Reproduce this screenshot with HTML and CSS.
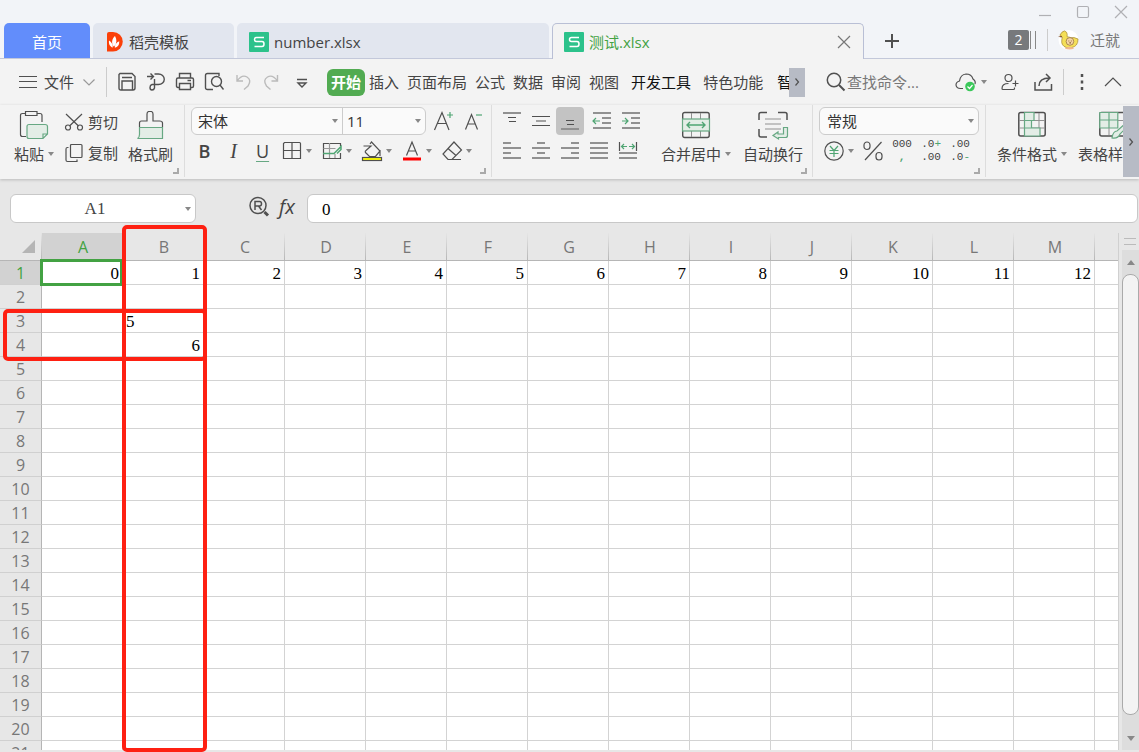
FILE: index.html
```html
<!DOCTYPE html>
<html lang="zh-CN">
<head>
<meta charset="utf-8">
<title>测试.xlsx</title>
<link rel="stylesheet" href="styles.css">
</head>
<body>
<svg class="defs" aria-hidden="true">
  <symbol id="caret" viewBox="0 0 6 4"><path d="M0 0h6L3 4z" fill="#888"/></symbol>
  <symbol id="sheet-logo" viewBox="0 0 20 20"><rect width="20" height="20" rx="1" fill="#2cc28b"/><path d="M15 5.500H7.500q-2 0-2 2t2 2h5.500q2 0 2 2.500t-2 2.500H5.500" fill="none" stroke="#fff" stroke-width="1.500"/></symbol>
  <symbol id="corner" viewBox="0 0 6 6"><path d="M5 0v5H0" fill="none" stroke="#aaa" stroke-width="2"/></symbol>
</svg>

<header class="titlebar">
  <div class="window-controls">
    <button aria-label="最小化"><svg viewBox="0 0 14 14"><path d="M1 10.500h12"/></svg></button>
    <button aria-label="最大化"><svg viewBox="0 0 14 14"><rect x="1.500" y="1.500" width="11" height="11" rx="1.500"/></svg></button>
    <button aria-label="关闭"><svg viewBox="0 0 14 14"><path d="M1 1l12 12M13 1L1 13"/></svg></button>
  </div>
  <div class="tabstrip">
    <button class="tab tab-home">首页</button>
    <button class="tab tab-template"><svg class="logo" viewBox="0 0 20 20"><path d="M4 0h4a9.500 9.500 0 010 19.500H2V2q0-2 2-2z" fill="#fb4009"/><path d="M8.700 14.500C6 11 7 6.500 10 4c2 3.500 2 7-.8 10.500zM7.800 15.500C4.800 15 3.500 11.500 4 8.500 6.500 10 8 12.500 7.800 15.500zM9.800 15.800c0-3 1.500-5.500 4.500-6.500 0 4-1.500 6-4.500 6.500z" fill="#fff"/></svg>稻壳模板</button>
    <button class="tab tab-file"><svg class="logo"><use href="#sheet-logo"/></svg>number.xlsx</button>
    <div class="tab tab-file tab-active"><svg class="logo"><use href="#sheet-logo"/></svg><span class="tab-name">测试.xlsx</span>
      <button class="tab-close" aria-label="关闭标签"><svg viewBox="0 0 14 14"><path d="M1 1l12 12M13 1L1 13"/></svg></button>
    </div>
    <button class="tab-add" aria-label="新建"><svg viewBox="0 0 16 16"><path d="M8 1v14M1 8h14"/></svg></button>
    <div class="account">
      <span class="count">2</span>
      <svg class="avatar" viewBox="0 0 22 22"><circle cx="11" cy="11" r="10.500" fill="#fff"/><path d="M2 6l2-3q3-3 5 0 1 2 .5 4.500Q14 9 17 8.500L21 10q0 8-7 9H9q-6-2-5-8L4.500 8z" fill="#f4df57" stroke="#a98d3b" stroke-width=".8"/><path d="M0 7.500L4 6.500 4 8.500z" fill="#7d4a26"/><circle cx="12.500" cy="12.500" r="4" fill="#f7d7a4" stroke="#94703d" stroke-width=".8"/><path d="M7 20q5-4 10 0-5 2-10 0z" fill="#f1b98c"/><path d="M11 12h.8M13.500 12h.8M12 14h1.500" stroke="#7d4a26"/></svg>
      <span class="user">迁就</span>
    </div>
  </div>
</header>

<nav class="menubar">
  <button class="file-menu"><svg class="i18" viewBox="0 0 18 18"><path d="M0 3.500h18M0 8.500h18M0 14.500h18"/></svg>文件<svg class="chev" viewBox="0 0 12 7"><path d="M.5.5L6 6 11.500.5" stroke="#999"/></svg></button>
  <div class="quick">
    <button aria-label="保存"><svg viewBox="0 0 20 20"><path d="M3 1.500h12l3 3v11.500q0 2-2 2H4q-2 0-2-2V2.500zM5 18V9h10.500v9M5 5.500h10"/></svg></button>
    <button aria-label="输出为PDF"><svg viewBox="0 0 20 20"><path d="M1 4.500h6M4.500 1.500l3 3-3 3M8.500 2h4a5.500 5 0 010 10.500H8M8.500 7v9q-.5 2-2.500 2t-2-2.500 2-3h3"/></svg></button>
    <button aria-label="打印"><svg viewBox="0 0 20 20"><path d="M4.500 6V1.500h11V6M4 15.500H3q-1.500 0-1.500-1.500V7.500Q1.500 6 3 6h14q1.500 0 1.500 1.500V14q0 1.500-1.500 1.500h-1M4.500 11.500h11v6h-11zM12.500 8.500H16"/></svg></button>
    <button aria-label="打印预览"><svg viewBox="0 0 20 20"><path d="M9 17.500H3.500q-2 0-2-2v-12q0-2 2-2H15V4"/><circle cx="12.500" cy="9.500" r="5"/><path d="M16 13l3.500 4.500"/></svg></button>
    <button aria-label="撤销"><svg class="muted" viewBox="0 0 20 20"><path d="M4 3v6h6M4 9q5-7 10-4t1 9l-4 3.500"/></svg></button>
    <button aria-label="恢复"><svg class="muted" viewBox="0 0 20 20"><path d="M15.500 3v6h-6M15.500 9q-5-7-10-4t-1 9l4 3.500"/></svg></button>
    <button aria-label="自定义快速访问"><svg viewBox="0 0 20 20"><path d="M6 7.500h10M7 11l4 4 4-4z"/></svg></button>
  </div>
  <div class="menus">
    <button class="current">开始</button>
    <button>插入</button><button>页面布局</button><button>公式</button><button>数据</button><button>审阅</button><button>视图</button>
    <button class="wide dark">开发工具</button><button class="wide">特色功能</button><button class="wide cut dark">智能</button>
  </div>
  <button class="menu-next" aria-label="更多选项卡"><svg viewBox="0 0 4 8"><path d="M.5.5L3.500 4 .5 7.500"/></svg></button>
  <label class="search"><svg class="i20" viewBox="0 0 20 20"><circle cx="8" cy="8" r="6.700" stroke-width="1.500"/><path d="M13 13l5.500 5.500" stroke-width="2"/></svg><input type="text" placeholder="查找命令..." aria-label="查找命令"></label>
  <div class="menu-right">
    <button class="drop" aria-label="云同步"><svg class="cloud" viewBox="0 0 22 20"><path d="M8 16.500H5.500q-4 0-4.500-3.500 0-3 3.500-4Q5.500 2.500 11 2q5.500 0 7 5 3 2 2 5"/><circle cx="15" cy="14.500" r="4.800" fill="#3bc85a" stroke="none"/><path d="M12.500 14.500l2 2 3-3.500" stroke="#fff"/></svg><svg class="caret"><use href="#caret"/></svg></button>
    <button aria-label="协作"><svg class="i18" viewBox="0 0 18 18"><circle cx="7.500" cy="5" r="3.500"/><path d="M7.500 10.500q-6.500 0-6.500 5 0 1 1 1h10.500q1 0 1-1v-1M14.500 7.500v6M11.500 10.500h6"/></svg></button>
    <button aria-label="分享"><svg class="i20" viewBox="0 0 20 20"><path d="M2 10v8h16.500v-6M6 14q0-8 10.500-8M13 2l4 4-4 4" stroke-width="1.500"/></svg></button>
    <span class="rule"></span>
    <button aria-label="更多"><svg class="dots" viewBox="0 0 4 16"><path d="M2 0v3M2 6.500v3M2 13v3" stroke-width="2.500"/></svg></button>
    <button aria-label="收起功能区"><svg class="i18" viewBox="0 0 18 18"><path d="M1 13l8-8 8 8"/></svg></button>
  </div>
</nav>

<section class="ribbon">
  <div class="group clipboard">
    <button class="big"><svg class="i28" viewBox="0 0 28 28"><path d="M5 2.500H2.500Q.5 2.500.5 4.500v19q0 2 2 2H6M17 2.500h3q2 0 2 2V11M5.500.5H17v4H5.500z"/><path d="M9 13.500h16q2.500 0 2.500 2V23l-4.500 4.500H9q-2 0-2-2V15.500q0-2 2-2zM27 23h-4v4" fill="#e3ede6" stroke="#67a883"/></svg><span>粘贴<svg class="caret"><use href="#caret"/></svg></span></button>
    <div class="stack">
      <button class="small"><svg class="i18" viewBox="0 0 18 18"><path d="M1 1l12.500 12M17 1L4.500 13"/><circle cx="3" cy="14.500" r="2.500"/><circle cx="15" cy="14.500" r="2.500"/></svg>剪切</button>
      <button class="small"><svg class="i18" viewBox="0 0 18 18"><path d="M6.500.5H16q1 0 1 1v11q0 1-1 1H6.500q-1 0-1-1v-11q0-1 1-1zM3.500 3.500h-1q-1.500 0-1.500 1.500v11q0 1.500 1.500 1.500H12v-2"/></svg>复制</button>
    </div>
    <button class="big"><svg class="i28" viewBox="0 0 28 28"><path d="M2.500 16v-4q0-2 2-2H10V3q0-2 1.500-2.500h3Q16 1 16 3v7h6.500q3 0 3 2v4"/><path d="M2.500 16.500h23v11H.5q2-1 2-4z" fill="#e3ede6" stroke="#67a883"/></svg><span>格式刷</span></button>
    <svg class="launcher"><use href="#corner"/></svg>
  </div>

  <div class="group font">
    <div class="stack">
      <div class="row">
        <div class="combo">
          <select class="font-name" aria-label="字体"><option>宋体</option></select><select class="font-size" aria-label="字号"><option>11</option></select>
        </div>
        <button aria-label="增大字号"><svg class="i20" viewBox="0 0 20 20"><path d="M1.500 19L9 1.500 16 19M4.500 12.500h9"/><path class="green" d="M14 4h6M17 1v6"/></svg></button>
        <button class="shrink" aria-label="减小字号"><svg class="i20" viewBox="0 0 20 20"><path d="M2.500 18.500L8.500 3.500l6 15M5 13h7.500"/><path class="green" d="M13 4h6"/></svg></button>
      </div>
      <div class="row format">
        <button class="glyph bold">B</button>
        <button class="glyph italic">I</button>
        <button class="glyph underline">U</button>
        <button class="drop" aria-label="边框"><svg class="i20" viewBox="0 0 20 20"><path d="M2.500 1.500h15q1 0 1 1v15H1.500v-15zM10 1.500v16M1.500 9.500h17"/></svg><svg class="caret"><use href="#caret"/></svg></button>
        <button class="drop" aria-label="单元格样式"><svg class="i20" viewBox="0 0 20 20"><path d="M18.500 5V2.500h-17v15h17V12"/><path d="M7.500 2v15M1.500 7.500h12M13 13v4" stroke="#999"/><path class="green" d="M1 12.500h11L19 5.500v3l-4 4" stroke-width="1.500"/></svg><svg class="caret"><use href="#caret"/></svg></button>
        <button class="drop" aria-label="填充颜色"><svg class="i20" viewBox="0 0 20 20"><path d="M1.500 5H9l-5 4.500q-1.500 1 0 2.500l3.500 3.500h6L18 10 9.500 1 8 3M18 9v6"/><rect x=".5" y="16.500" width="19" height="3" fill="#ff0"/></svg><svg class="caret"><use href="#caret"/></svg></button>
        <button class="drop" aria-label="字体颜色"><svg class="i20" viewBox="0 0 20 20"><path d="M4.500 14.500L10 1l5.500 13.500M6.500 10h7"/><path d="M1 18h18" stroke="#f00" stroke-width="3"/></svg><svg class="caret"><use href="#caret"/></svg></button>
        <button class="drop" aria-label="清除"><svg class="i20" viewBox="0 0 20 20"><path d="M12 1l7.500 8L10 18.500H6l-5-5.500zM6 7.500l8 7M9 18.500h10"/></svg><svg class="caret"><use href="#caret"/></svg></button>
      </div>
    </div>
    <svg class="launcher"><use href="#corner"/></svg>
  </div>

  <div class="group align">
    <div class="stack">
      <div class="row cells">
        <button aria-label="顶端对齐"><svg viewBox="0 0 18 18"><path class="grey" d="M0 1h18"/><path d="M5 5.500h8M6 9.500h7"/></svg></button>
        <button aria-label="垂直居中"><svg viewBox="0 0 18 18"><path d="M0 4.500h18M0 13.500h18M4 9h10"/></svg></button>
        <button class="pressed" aria-label="底端对齐"><svg viewBox="0 0 18 18"><path class="grey" d="M0 17h18"/><path d="M5 8.500h8M6 12.500h7"/></svg></button>
        <button class="indent" aria-label="减少缩进"><svg viewBox="0 0 18 18"><path class="grey" d="M0 1h18M9 6h9M9 11h9M0 16h18"/><path class="green" d="M0 9h7M3 6L0 9l3 3"/></svg></button>
        <button aria-label="增加缩进"><svg viewBox="0 0 18 18"><path class="grey" d="M0 1h18M9 6h9M9 11h9M0 16h18"/><path class="green" d="M0 9h6M3 6l3 3-3 3"/></svg></button>
      </div>
      <div class="row cells">
        <button aria-label="左对齐"><svg viewBox="0 0 18 18"><path class="grey" d="M0 1h8M0 6h18M0 11h8M0 16h18"/></svg></button>
        <button aria-label="居中"><svg viewBox="0 0 18 18"><path class="grey" d="M5 1h8M0 6h18M5 11h8M0 16h18"/></svg></button>
        <button aria-label="右对齐"><svg viewBox="0 0 18 18"><path class="grey" d="M10 1h8M0 6h18M10 11h8M0 16h18"/></svg></button>
        <button aria-label="两端对齐"><svg viewBox="0 0 18 18"><path class="grey" d="M0 1h18M0 6h18M0 11h18M0 16h18"/></svg></button>
        <button aria-label="分散对齐"><svg viewBox="0 0 18 18"><path d="M.5 0v9M17.500 0v9"/><path class="grey" d="M0 11h18M0 16h18"/><path class="green" d="M2.500 4.500H8M5 2L2.500 4.500 5 7M10 4.500h5.500M13 2l2.500 2.500L13 7"/></svg></button>
      </div>
    </div>
    <button class="big"><svg class="i28" viewBox="0 0 28 28"><rect x=".7" y="1.500" width="26.500" height="25" rx="2" stroke-width="1.400"/><path class="grey thin" d="M9.500 2v24M18.500 2v24"/><rect x=".5" y="8" width="27" height="12" fill="#e3ede6" stroke="#67a883"/><path class="green" d="M5 14h18M8 11l-3 3 3 3M20 11l3 3-3 3" stroke-width="1.400"/></svg><span>合并居中<svg class="caret"><use href="#caret"/></svg></span></button>
    <button class="big wrap"><svg class="i28" viewBox="0 0 28 28"><path d="M0 9V3.500q0-2 2-2h6M19 1.500h7q2 0 2 2V9M0 18v6q0 2 2 2h6" stroke-width="1.500"/><path class="grey thin" d="M6 8h16M6 13h16M6 18h16"/><path d="M24.500 16.500H28.500v8q0 2-2 2h-7v1.500L14 24.500l5-3.500v2h5.500z" fill="#e3ede6" stroke="#67a883"/></svg><span>自动换行</span></button>
    <svg class="launcher"><use href="#corner"/></svg>
  </div>

  <div class="group">
    <div class="stack">
      <div class="combo"><select class="number-format" aria-label="数字格式"><option>常规</option></select></div>
      <div class="row number">
        <button class="drop" aria-label="货币"><svg class="i20" viewBox="0 0 20 20"><circle cx="10" cy="10" r="9.200"/><path class="green" d="M6 5l4 4.500L14 5M10 9.500V16M5.500 9.500h9M5.500 12.500h9"/></svg><svg class="caret"><use href="#caret"/></svg></button>
        <button aria-label="百分比"><svg class="i20" viewBox="0 0 20 20"><path d="M18.500 1L2 19"/><rect x="1" y="1" width="6" height="7.500" rx="3"/><rect x="13" y="11.500" width="6" height="7.500" rx="3"/></svg></button>
        <button class="digits" aria-label="千位分隔"><span>000</span><span class="sep-mark">,</span></button>
        <button class="digits" aria-label="增加小数位数"><span>.0<b>+</b></span><span>.00</span></button>
        <button class="digits" aria-label="减少小数位数"><span>.00</span><span>.0<b>-</b></span></button>
      </div>
    </div>
    <svg class="launcher"><use href="#corner"/></svg>
  </div>

  <div class="group styles">
    <button class="big"><svg class="i28" viewBox="0 0 28 28"><rect x=".8" y="1.500" width="26.400" height="23.500" rx="2" stroke-width="1.500"/><path class="grey thin" d="M1 9.500h26M1 17h26M21 2v23"/><path d="M6.500 1.500H16V9.500H6.500zM6.500 9.500h7V17h-7zM6.500 17H22v8H6.500z" fill="#e3ede6" stroke="#67a883"/></svg><span>条件格式<svg class="caret"><use href="#caret"/></svg></span></button>
    <button class="big"><svg class="i28" viewBox="0 0 28 28"><rect x=".8" y="1.500" width="26.400" height="23.500" rx="2" stroke-width="1.500"/><path d="M.8 1.500h18V17H.8zM10 1.500V17M.8 9h18" fill="#e3ede6" stroke="#67a883"/><path class="grey thin" d="M19 9.500h8M10 17v7"/><path d="M27 12l-9 8q-4 0-5 7 6 1 8-4l7-7z" fill="#e3ede6" stroke="#67a883"/></svg><span>表格样式<svg class="caret"><use href="#caret"/></svg></span></button>
  </div>
  <button class="ribbon-next" aria-label="更多工具"><svg viewBox="0 0 4 8"><path d="M.5.5L3.500 4 .5 7.500"/></svg></button>
</section>

<section class="formula-bar">
  <select class="name-box" aria-label="名称框"><option>A1</option></select>
  <div class="formula-tools">
    <button aria-label="浏览"><svg class="i22" viewBox="0 0 22 22"><circle cx="9" cy="9.500" r="8" stroke-width="1.500"/><path d="M6 14V5.500h4.500q2 0 2 2.200t-2 2.300H6M9.500 10l3 4" stroke-width="1.500"/><path d="M15.500 16l3.500 3.500" stroke-width="3"/></svg></button>
    <button class="fx">fx</button>
  </div>
  <input class="formula" type="text" value="0" aria-label="编辑栏">
</section>

<main class="workspace">
  <div class="sheet">
    <table>
      <thead><tr id="columns"><th class="corner" aria-label="全选"><svg viewBox="0 0 14 14"><path d="M14 0v14H0z"/></svg></th></tr></thead>
      <tbody id="rows"></tbody>
    </table>
    <div class="selection"></div>
  </div>
  <div class="scrollbar">
    <div class="splitter"></div>
    <div class="track">
      <button aria-label="向上滚动"><svg viewBox="0 0 8 5"><path d="M0 5h8L4 0z"/></svg></button>
      <div class="thumb"></div>
      <button aria-label="向下滚动"><svg viewBox="0 0 8 5"><path d="M0 0h8L4 5z"/></svg></button>
    </div>
  </div>
  <div class="mark mark-column"></div>
  <div class="mark mark-rows"></div>
</main>
<script src="script.js"></script>
</body>
</html>
```

FILE: styles.css
```css
* { box-sizing: border-box; }

body {
  margin: 0;
  height: 100vh;
  display: flex;
  flex-direction: column;
  overflow: hidden;
  background: #e7e7e7;
  color: #444;
  font: 15px/20px "Open Sans", "Noto Sans CJK SC", sans-serif;
}

button, select, input {
  margin: 0;
  padding: 0;
  border: 0;
  background: none;
  color: inherit;
  font: inherit;
  border-radius: 0;
}

button {
  display: flex;
  align-items: center;
  justify-content: center;
  flex: none;
  white-space: nowrap;
}

svg { display: block; flex: none; fill: none; stroke: #505050; stroke-width: 1.2; overflow: visible; }
.defs { position: absolute; width: 0; height: 0; }
use { stroke: none; }
.i18 { width: 18px; height: 18px; }
.i20 { width: 20px; height: 20px; }
.i22 { width: 22px; height: 22px; }
.i28 { width: 28px; height: 28px; }
.caret { width: 6px; height: 4px; }
.green { stroke: #4fa573; }
.grey { stroke: #919191; stroke-width: 2; }
.thin { stroke-width: 1; }

/* Title bar */
.titlebar { flex: none; background: #f2f4f8; }

.window-controls {
  display: flex;
  justify-content: flex-end;
  gap: 24px;
  height: 23px;
  padding-right: 11px;
}
.window-controls svg { width: 14px; height: 14px; stroke: #b0b0b4; }

.tabstrip {
  display: flex;
  gap: 3px;
  height: 36px;
  padding-left: 4px;
  border-bottom: 1px solid #c3c8da;
}

.tab {
  justify-content: flex-start;
  align-items: center;
  padding: 2px 12px 0;
  gap: 5px;
  border-radius: 5px 5px 0 0;
  background: #e2e6ef;
}
.tab-home { width: 86px; justify-content: center; background: #628dfb; color: #fff; }
.tab-template { width: 141px; gap: 4px; }
.tab-file { width: 312px; }
.tab-active {
  display: flex;
  margin-bottom: -1px;
  padding: 0 12px 0 11px;
  border: 1px solid #b9bfd5;
  border-bottom: 0;
  background: #f3f3f3;
}
.tab-name { flex: 1; color: #43a243; }
.tab-close svg { width: 14px; height: 14px; stroke: #777; }
.logo { width: 20px; height: 20px; stroke: none; }
.tab-add { margin-left: 17px; }
.tab-add svg { width: 16px; height: 16px; stroke-width: 2; }

.account {
  display: flex;
  align-items: center;
  margin-left: auto;
  padding-right: 19px;
  padding-bottom: 2px;
  color: #777;
}
.count {
  position: relative;
  width: 21px;
  margin-right: 18px;
  border-radius: 2px;
  background: #77797c;
  color: #fff;
  text-align: center;
  font-size: 14px;
}
.count::after {
  content: "";
  position: absolute;
  left: 22px;
  top: 1px;
  width: 4px;
  height: 18px;
  border: solid #888;
  border-width: 0 1px;
}
.avatar {
  width: 32px;
  height: 22px;
  padding-left: 10px;
  border-left: 1px solid #ccc;
  stroke: none;
}
.user { margin-left: 11px; }

/* Menu bar */
.menubar {
  display: flex;
  flex: none;
  align-items: center;
  height: 46px;
  padding-left: 19px;
  background: #f3f3f3;
}
.file-menu { gap: 7px; padding-right: 11px; border-right: 1px solid #ccc; height: 30px; }
.chev { width: 12px; height: 7px; margin-left: 2px; }
.quick { display: flex; gap: 9px; padding-left: 10px; }
.quick svg { width: 20px; height: 20px; stroke-width: 1.4; }
.quick .muted { stroke: #bbb; }

.menus { display: flex; align-items: center; width: 473px; margin-left: 16px; overflow: hidden; }
.menus button { margin-right: 8px; }
.menus .current {
  width: 38px;
  height: 27px;
  margin-right: 4px;
  border-radius: 6px;
  background: #52ab52;
  color: #fff;
  font-weight: 700;
}
.menus .wide { margin-left: 4px; }
.menus .cut { margin-left: 6px; }
.menus .dark { color: #111; }

.menu-next, .ribbon-next { width: 16px; background: #b7bbc5; }
.menu-next { position: relative; height: 29px; margin-left: -11px; }
.menu-next svg, .ribbon-next svg { width: 4px; height: 8px; }

.search { display: flex; align-items: center; margin-left: 21px; gap: 1px; }
.search input { width: 84px; }
.search input::placeholder { color: #777; opacity: 1; }

.menu-right {
  display: flex;
  align-items: center;
  gap: 14px;
  margin-left: auto;
  padding-right: 17px;
}
.drop { gap: 4px; }
.cloud { width: 22px; height: 20px; }
.rule { width: 1px; height: 26px; margin: 0 2px 0 -4px; background: #ccc; }
.dots { width: 4px; height: 16px; margin-right: 6px; }

/* Ribbon */
.ribbon {
  display: flex;
  flex: none;
  height: 74px;
  background: #f3f3f3;
  box-shadow: 0 1px 3px #bbb;
}
.group {
  position: relative;
  display: flex;
  flex: none;
  height: 72px;
  padding: 2px 6px 0;
  border-right: 1px solid #ddd;
}
.launcher { position: absolute; right: 5px; bottom: 3px; width: 6px; height: 6px; }
.stack { display: flex; flex-direction: column; gap: 2px; }
.row { display: flex; align-items: center; height: 28px; }

.big {
  flex-direction: column;
  justify-content: flex-start;
  padding-top: 4px;
}
.big span { display: flex; align-items: center; gap: 4px; line-height: 30px; }
.small { height: 29px; gap: 5px; }
.clipboard { padding-left: 14px; padding-right: 11px; }
.clipboard .stack { margin: 0 10px 0 11px; }
.font { padding-right: 8px; }

.combo {
  display: flex;
  border: 1px solid #ccc;
  border-radius: 6px;
  background: #fafafa;
}
.combo select, .name-box {
  appearance: none;
  background: url("data:image/svg+xml,%3Csvg xmlns='http://www.w3.org/2000/svg' viewBox='0 0 6 4'%3E%3Cpath d='M0 0h6L3 4z' fill='%23888'/%3E%3C/svg%3E") no-repeat right 4px center / 6px 4px;
}
.combo select { height: 26px; padding-left: 6px; color: #333; }
.combo .font-name { width: 151px; border-right: 1px solid #ccc; }
.combo .font-size { width: 82px; padding-left: 4px; }
.combo .number-format { width: 158px; padding-left: 7px; }
.combo + button { margin-left: 7px; }
.shrink { margin-left: 10px; }

.format { gap: 10px; padding-left: 4px; }
.glyph { width: 19px; height: 26px; font-size: 18px; line-height: 22px; }
.bold { font-weight: 600; }
.italic { font-family: "Liberation Serif", serif; font-style: italic; font-size: 20px; }
.underline { text-decoration: underline 1px #67a883; text-underline-offset: 3px; }

.align { padding-right: 9px; }
.cells { gap: 1px; }
.cells button { width: 28px; height: 28px; border-radius: 4px; }
.cells svg { width: 18px; height: 18px; }
.cells .pressed { background: #c3c3c3; }
.cells .indent { margin-left: 3px; }
.align .stack { margin-right: 16px; }
.wrap { margin-left: 12px; }

.number { gap: 9px; padding-left: 5px; }
.digits {
  flex-direction: column;
  min-width: 20px;
  font: 11px/13px "Liberation Mono", monospace;
}
.digits b { color: #4fa573; font-weight: 400; }
.digits .sep-mark { color: #4fa573; font-weight: 700; }

.styles { flex: 1 1 0; gap: 11px; padding-left: 11px; padding-right: 0; border: 0; overflow: hidden; }
.ribbon-next { height: 71px; margin-top: 1px; }

/* Formula bar */
.formula-bar {
  display: flex;
  flex: none;
  align-items: center;
  height: 54px;
  padding: 5px 1px 0 10px;
}
.name-box, .formula {
  height: 29px;
  border: 1px solid #c8c8c8;
  border-radius: 6px;
  background-color: #fff;
  font: 17px/20px "Liberation Serif", serif;
}
.name-box { width: 186px; padding-right: 16px; text-align: center; text-align-last: center; }
.formula-tools { display: flex; align-items: center; gap: 8px; width: 111px; padding: 0 0 4px 53px; }
.fx { font: italic 20px/22px "Open Sans", sans-serif; }
.formula { flex: 1; min-width: 0; padding: 2px 0 0 14px; color: #000; }

/* Worksheet */
.workspace { position: relative; display: flex; flex: 1; min-height: 0; padding-bottom: 2px; }
.sheet { position: relative; flex: 1; min-width: 0; overflow: hidden; background: #fff; border-right: 1px solid #d0d0d0; }

table { width: 1176px; border-collapse: separate; border-spacing: 0; table-layout: fixed; }
th {
  padding: 0;
  color: #777;
  font-size: 16px;
  font-weight: 400;
  line-height: 20px;
  text-align: center;
  background: #e7e7e7;
}
thead th {
  width: 81px;
  height: 28px;
  padding-left: 2px;
  border-right: 1px solid;
  border-bottom: 1px solid #b5b5b5;
  border-image: linear-gradient(#e7e7e7, #b5b5b5) 1;
}
thead .corner { width: 42px; padding: 0; border-right-color: #b5b5b5; }
.corner svg { width: 13px; height: 13px; margin-left: 22px; stroke: none; fill: #b5b5b5; }
tbody th {
  height: 24px;
  border-right: 1px solid #b5b5b5;
  border-bottom: 1px solid #d0d0d0;
}
th.active { background: #d2d2d2; color: #43a243; }
td {
  padding: 2px 3px 0 3px;
  height: 24px;
  border-right: 1px solid #d3d3d3;
  border-bottom: 1px solid #d3d3d3;
  color: #000;
  font: 17px/20px "Liberation Serif", serif;
  text-align: right;
}
td.text { text-align: left; }

.selection {
  position: absolute;
  left: 40px;
  top: 26px;
  width: 83px;
  height: 27px;
  border: 3px solid #43a243;
}

.scrollbar { display: flex; flex-direction: column; width: 20px; padding-left: 3px; }
.splitter { height: 17px; display: grid; align-items: center; }
.splitter::before { content: ""; height: 5px; margin: 0 3px 0 2px; border: solid #bbb; border-width: 1px 0; }
.track { display: flex; flex: 1; flex-direction: column; background: #ddd; }
.track button { height: 24px; }
.track svg { width: 8px; height: 5px; fill: #888; stroke: none; }
.thumb { flex: 1; margin-bottom: 11px; border: 1px solid #aaa; border-radius: 8px; background: #f3f3f3; }

.mark { position: absolute; border: 4px solid #fe2012; border-radius: 5px; }
.mark-column { left: 122px; top: -8px; bottom: 0; width: 85px; }
.mark-rows { left: 3px; top: 76px; width: 204px; height: 52px; }
```

FILE: script.js
```js
const columnNames = "ABCDEFGHIJKLM".split("").concat("");
const values = { 3: { B: "5" }, 4: { B: 6 } };
values[1] = Object.fromEntries(columnNames.slice(0, 13).map((name, i) => [name, i]));

function headerCell(label, active) {
  const cell = document.createElement("th");
  cell.textContent = label;
  if (active) cell.className = "active";
  return cell;
}

columnNames.forEach((name) => {
  document.getElementById("columns").append(headerCell(name, name === "A"));
});

for (let row = 1; row <= 21; row++) {
  const line = document.createElement("tr");
  line.append(headerCell(row, row === 1));
  columnNames.forEach((name) => {
    const cell = document.createElement("td");
    const value = values[row]?.[name];
    if (value !== undefined) cell.textContent = value;
    if (typeof value === "string") cell.className = "text";
    line.append(cell);
  });
  document.getElementById("rows").append(line);
}
```
